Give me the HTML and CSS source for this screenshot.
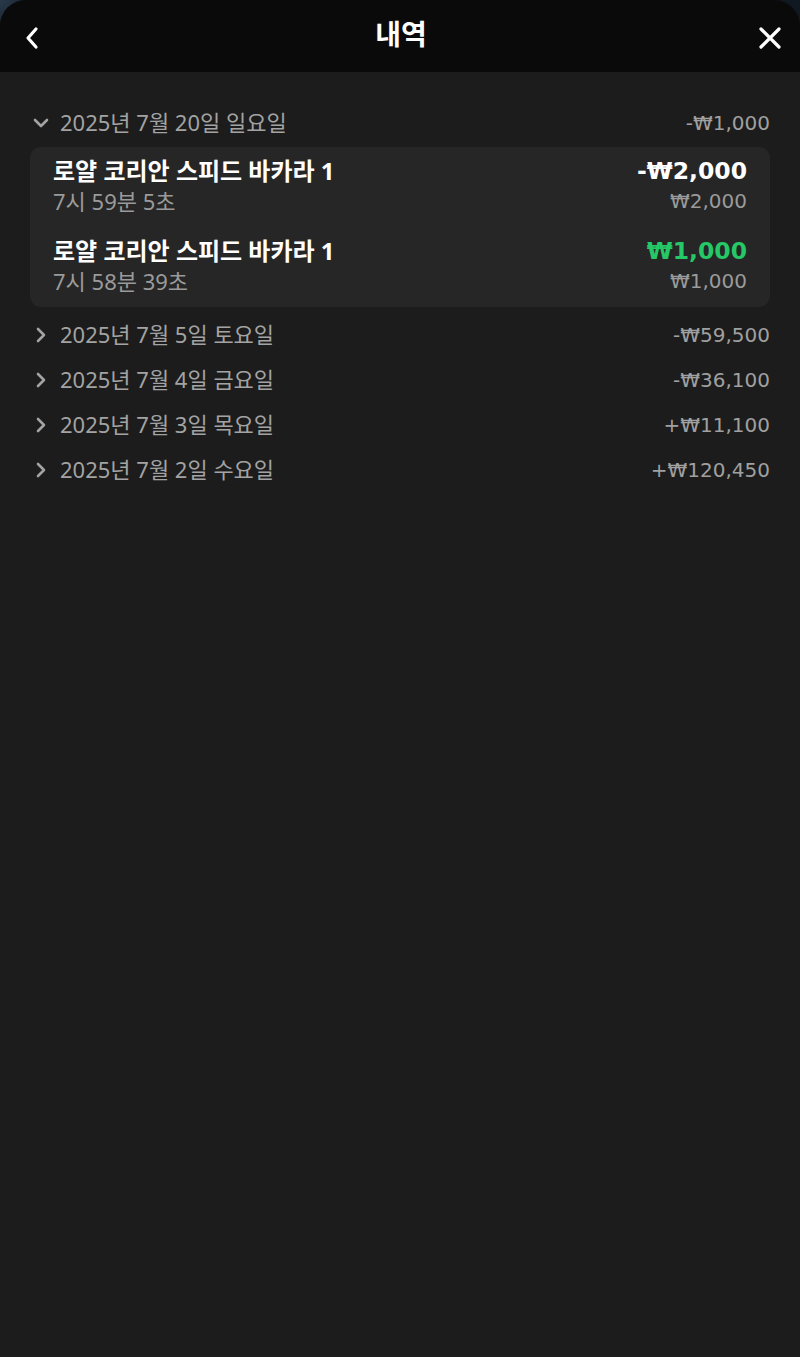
FILE: index.html
```html
<!DOCTYPE html>
<html lang="ko">
<head>
    <meta charset="UTF-8">
    <meta name="viewport" content="width=device-width, initial-scale=1.0">
    <title>내역</title>
    <link rel="stylesheet" href="styles.css">
</head>
<body>
    <div class="sheet">
        <!-- Header -->
        <header class="top-bar">
            <button class="icon-btn" aria-label="뒤로">
                <svg width="16" height="24" viewBox="0 0 16 24"><path d="M12 3 L4 12 L12 21" fill="none" stroke="#fff" stroke-width="3.2" stroke-linecap="round" stroke-linejoin="round"/></svg>
            </button>
            <h1 class="title">내역</h1>
            <button class="icon-btn" aria-label="닫기">
                <svg width="24" height="24" viewBox="0 0 24 24"><path d="M3 3 L21 21 M21 3 L3 21" fill="none" stroke="#fff" stroke-width="3.2" stroke-linecap="round"/></svg>
            </button>
        </header>

        <main class="history">
            <!-- Open day -->
            <div class="day open">
                <div class="day-row">
                    <span class="chevron">
                        <svg width="16" height="16" viewBox="0 0 16 16"><path d="M2 5 L8 11 L14 5" fill="none" stroke="#a3a3a3" stroke-width="2.6" stroke-linecap="round" stroke-linejoin="round"/></svg>
                    </span>
                    <span class="day-label">2025년 7월 20일 일요일</span>
                    <span class="day-total">-₩1,000</span>
                </div>
                <div class="card">
                    <div class="bet">
                        <div class="bet-line">
                            <span class="bet-name">로얄 코리안 스피드 바카라 1</span>
                            <span class="bet-result">-₩2,000</span>
                        </div>
                        <div class="bet-line sub">
                            <span class="time">7시 59분 5초</span>
                            <span class="amount">₩2,000</span>
                        </div>
                    </div>
                    <div class="bet">
                        <div class="bet-line">
                            <span class="bet-name">로얄 코리안 스피드 바카라 1</span>
                            <span class="bet-result win">₩1,000</span>
                        </div>
                        <div class="bet-line sub">
                            <span class="time">7시 58분 39초</span>
                            <span class="amount">₩1,000</span>
                        </div>
                    </div>
                </div>
            </div>

            <div class="day">
                <div class="day-row">
                    <span class="chevron">
                        <svg width="16" height="16" viewBox="0 0 16 16"><path d="M5 2 L11 8 L5 14" fill="none" stroke="#a3a3a3" stroke-width="2.6" stroke-linecap="round" stroke-linejoin="round"/></svg>
                    </span>
                    <span class="day-label">2025년 7월 5일 토요일</span>
                    <span class="day-total">-₩59,500</span>
                </div>
            </div>
            <div class="day">
                <div class="day-row">
                    <span class="chevron">
                        <svg width="16" height="16" viewBox="0 0 16 16"><path d="M5 2 L11 8 L5 14" fill="none" stroke="#a3a3a3" stroke-width="2.6" stroke-linecap="round" stroke-linejoin="round"/></svg>
                    </span>
                    <span class="day-label">2025년 7월 4일 금요일</span>
                    <span class="day-total">-₩36,100</span>
                </div>
            </div>
            <div class="day">
                <div class="day-row">
                    <span class="chevron">
                        <svg width="16" height="16" viewBox="0 0 16 16"><path d="M5 2 L11 8 L5 14" fill="none" stroke="#a3a3a3" stroke-width="2.6" stroke-linecap="round" stroke-linejoin="round"/></svg>
                    </span>
                    <span class="day-label">2025년 7월 3일 목요일</span>
                    <span class="day-total">+₩11,100</span>
                </div>
            </div>
            <div class="day">
                <div class="day-row">
                    <span class="chevron">
                        <svg width="16" height="16" viewBox="0 0 16 16"><path d="M5 2 L11 8 L5 14" fill="none" stroke="#a3a3a3" stroke-width="2.6" stroke-linecap="round" stroke-linejoin="round"/></svg>
                    </span>
                    <span class="day-label">2025년 7월 2일 수요일</span>
                    <span class="day-total">+₩120,450</span>
                </div>
            </div>
        </main>
    </div>
</body>
</html>
```

FILE: styles.css
```css
/* General Styles */
html, body {
    height: 100%;
}

body {
    margin: 0;
    background: radial-gradient(circle at 0 0, #2a3a4c 0, #101821 40px), #101821;
    font-family: "Noto Sans", "Noto Sans CJK KR", sans-serif;
    color: #fff;
}

.sheet {
    min-height: 100%;
    background-color: #1c1c1c;
    border-radius: 26px 26px 0 0;
    overflow: hidden;
}

/* Header */
.top-bar {
    height: 72px;
    background-color: #0a0a0a;
    display: flex;
    align-items: center;
    justify-content: space-between;
    padding: 0 18px 0 20px;
    box-sizing: border-box;
}

.icon-btn {
    background: none;
    border: none;
    padding: 0;
    width: 24px;
    height: 24px;
    display: flex;
    align-items: center;
    justify-content: center;
    margin-top: 4px;
    cursor: pointer;
}

.title {
    margin: 0;
    font-size: 28px;
    font-weight: 700;
    line-height: 1;
    padding-bottom: 4px;
}

/* History list */
.history {
    padding: 29px 30px 0 30px;
}

.day-row {
    height: 45px;
    display: flex;
    align-items: center;
    color: #a3a3a3;
    font-size: 22px;
}

.chevron {
    width: 30px;
    display: flex;
    align-items: center;
    padding-left: 3px;
    margin-bottom: 2px;
    box-sizing: border-box;
}

.day-label {
    flex: 1;
    margin-bottom: 5px;
}

/* amounts use a wider face, closer to the geometric digits */
.day-total,
.bet-result,
.amount {
    font-family: "DejaVu Sans", "Noto Sans", sans-serif;
}

.day-total {
    font-size: 20px;
    color: #a0a0a0;
    margin-bottom: 2px;
}

.card {
    background-color: #262626;
    border-radius: 11px;
    margin: 1px 0 6px;
    padding: 0 23px;
}

.bet {
    height: 80px;
    padding-top: 10px;
    box-sizing: border-box;
}

.bet-line {
    display: flex;
    justify-content: space-between;
    align-items: center;
    height: 28px;
}

.bet-name {
    font-size: 24px;
    font-weight: 700;
    margin-bottom: 4px;
}

.bet-result {
    font-size: 23.5px;
    font-weight: 700;
}

.bet-result.win {
    color: #25c766;
}

.bet-line.sub {
    height: 32px;
    font-size: 22px;
    color: #9a9a9a;
}

.bet-line.sub .time {
    margin-bottom: 2px;
}

.bet-line.sub .amount {
    font-size: 20px;
}
```
